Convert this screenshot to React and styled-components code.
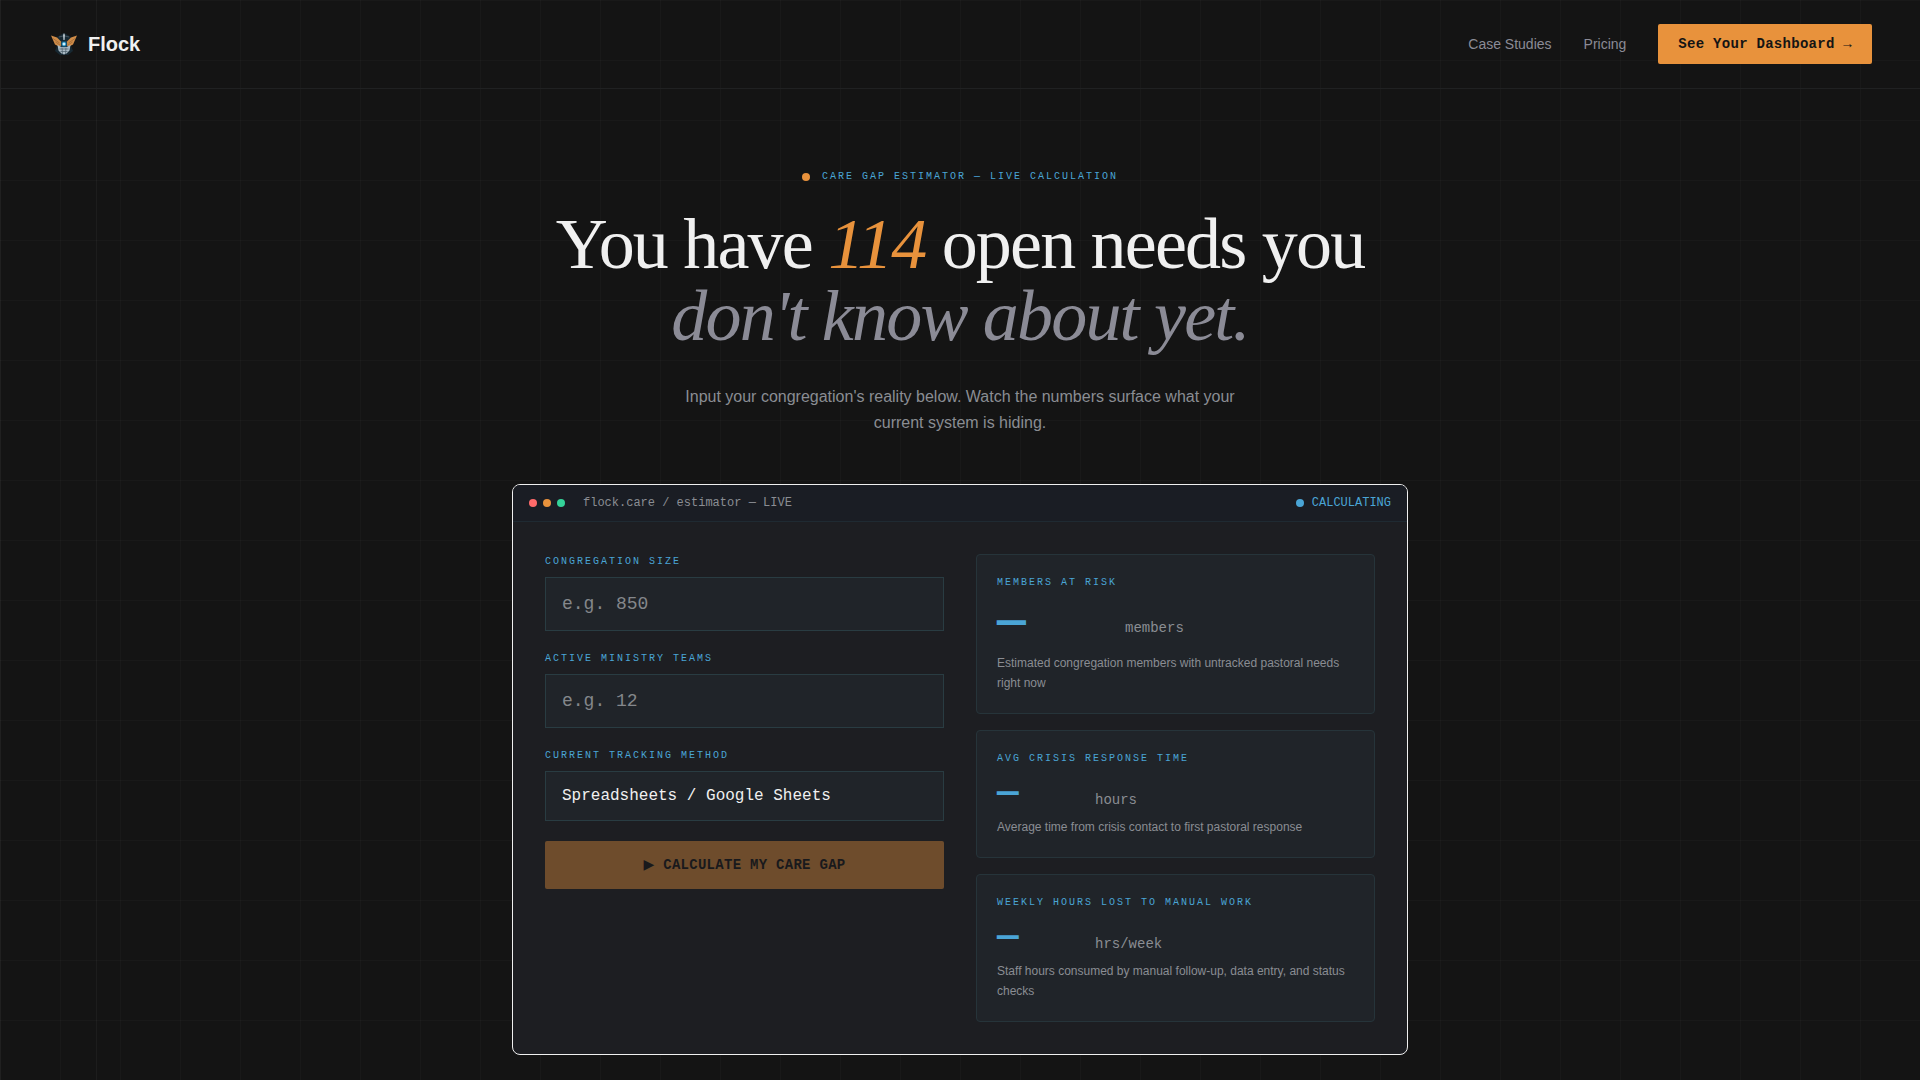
import React, { useState } from "react";
import styled, { createGlobalStyle, ThemeProvider } from "styled-components";

const theme = {
  bg: "#141414",
  panel: "#1d1e22",
  panelHeader: "#1a1d24",
  field: "#202429",
  fieldLine: "#293c42",
  text: "#f0f0f0",
  muted: "#8b8b96",
  soft: "#8a8d93",
  blue: "#4aa5d6",
  orange: "#e8923c",
  sans: '"Liberation Sans", Arial, sans-serif',
  serif: '"Liberation Serif", "Times New Roman", serif',
  mono: '"Liberation Mono", "Courier New", monospace',
};

const GlobalStyle = createGlobalStyle`
  *, *::before, *::after { box-sizing: border-box; }
  body {
    margin: 0;
    background-color: ${theme.bg};
    color: ${theme.text};
    font-family: ${theme.sans};
    font-size: 16px;
  }
`;

const Page = styled.div`
  min-height: 100vh;
  background-image:
    linear-gradient(90deg, rgba(255, 255, 255, 0.03) 1px, transparent 1px),
    linear-gradient(90deg, rgba(255, 255, 255, 0.04) 1px, transparent 1px),
    linear-gradient(rgba(255, 255, 255, 0.02) 1px, transparent 1px),
    linear-gradient(90deg, rgba(255, 255, 255, 0.02) 1px, transparent 1px);
  background-size: 1px 100%, 1px 100%, 60px 60px, 60px 60px;
  background-position: 0 0, 96px 0, 0 0, 0 0;
  background-repeat: no-repeat, no-repeat, repeat, repeat;
`;

const Nav = styled.nav`
  display: flex;
  align-items: center;
  justify-content: space-between;
  padding: 24px 48px;
  border-bottom: 1px solid #202122;
`;

const Brand = styled.a`
  display: flex;
  align-items: center;
  gap: 8px;
  color: ${(p) => p.theme.text};
  font-size: 20px;
  font-weight: 700;
  line-height: 28px;
  text-decoration: none;
`;

const NavLinks = styled.div`
  display: flex;
  align-items: center;
  gap: 32px;
`;

const NavLink = styled.a`
  color: ${(p) => p.theme.muted};
  font-size: 14px;
  line-height: 20px;
  text-decoration: none;
`;

const NavButton = styled.button`
  padding: 10px 20px;
  border: 0;
  border-radius: 2px;
  background: ${(p) => p.theme.orange};
  color: ${(p) => p.theme.bg};
  font-family: ${(p) => p.theme.mono};
  font-size: 14px;
  font-weight: 700;
  line-height: 20px;
  letter-spacing: 0.02em;
  cursor: pointer;
`;

const Hero = styled.main`
  display: flex;
  flex-direction: column;
  align-items: center;
  padding: 80px 24px 24px;
`;

const Tag = styled.div`
  color: ${(p) => p.theme.blue};
  font-family: ${(p) => p.theme.mono};
  font-size: 10px;
  line-height: 15px;
  letter-spacing: 0.2em;
  text-transform: uppercase;
`;

const Eyebrow = styled(Tag)`
  display: flex;
  align-items: center;
  gap: 12px;
  margin-bottom: 24px;
`;

const Dot = styled.span`
  width: 8px;
  height: 8px;
  flex: none;
  border-radius: 50%;
  background: ${(p) => p.$color};
`;

const Headline = styled.h1`
  margin: 0 0 32px;
  font-family: ${(p) => p.theme.serif};
  font-size: 72px;
  font-weight: 400;
  line-height: 72px;
  letter-spacing: -0.025em;
  text-align: center;
`;

const Accent = styled.em`
  color: ${(p) => p.$color};
`;

const Lead = styled.p`
  max-width: 576px;
  margin: 0 0 48px;
  color: ${(p) => p.theme.soft};
  font-size: 16px;
  line-height: 26px;
  text-align: center;
`;

const Terminal = styled.section`
  width: 100%;
  max-width: 896px;
  overflow: hidden;
  border: 1px solid ${(p) => p.theme.text};
  border-radius: 8px;
  background: ${(p) => p.theme.panel};
`;

const TerminalBar = styled.header`
  display: flex;
  align-items: center;
  justify-content: space-between;
  padding: 10px 16px;
  border-bottom: 1px solid #1f2a32;
  background: ${(p) => p.theme.panelHeader};
  font-family: ${(p) => p.theme.mono};
  font-size: 12px;
  line-height: 16px;
`;

const BarGroup = styled.div`
  display: flex;
  align-items: center;
  gap: ${(p) => p.$gap}px;
  color: ${(p) => p.$color};
`;

const Columns = styled.div`
  display: grid;
  grid-template-columns: 1fr 1fr;
  gap: 32px;
  padding: 32px;

  @media (max-width: 760px) {
    grid-template-columns: 1fr;
  }
`;

const Form = styled.form`
  display: flex;
  flex-direction: column;
  gap: 20px;
`;

const Field = styled.div`
  display: flex;
  flex-direction: column;
  gap: 8px;
`;

const Input = styled.input`
  width: 100%;
  height: 54px;
  padding: 0 16px;
  border: 1px solid ${(p) => p.theme.fieldLine};
  border-radius: 0;
  outline: none;
  appearance: none;
  background: ${(p) => p.theme.field};
  color: ${(p) => p.theme.text};
  font-family: ${(p) => p.theme.mono};
  font-size: 18px;

  &::placeholder {
    color: #84878b;
    opacity: 1;
  }
`;

const Select = styled(Input)`
  height: 50px;
  font-size: 16px;
`;

const Submit = styled.button`
  padding: 14px 20px;
  border: 0;
  border-radius: 2px;
  background: ${(p) => p.theme.orange};
  color: ${(p) => p.theme.bg};
  font-family: ${(p) => p.theme.mono};
  font-size: 14px;
  font-weight: 700;
  line-height: 20px;
  letter-spacing: 0.02em;
  text-transform: uppercase;
  cursor: pointer;

  &:disabled {
    opacity: 0.4;
    cursor: not-allowed;
  }
`;

const PlayGlyph = styled.span`
  font-family: "DejaVu Sans", sans-serif;
  line-height: 1;
`;

const Results = styled.div`
  display: flex;
  flex-direction: column;
  gap: 16px;
`;

const Card = styled.article`
  padding: 20px;
  border: 1px solid #26343a;
  border-radius: 4px;
  background: ${(p) => p.theme.field};
`;

const Metric = styled.div`
  display: flex;
  align-items: flex-end;
  gap: 8px;
  margin: 8px 0 ${(p) => (p.$large ? 7 : 3)}px;
  font-family: ${(p) => p.theme.mono};
`;

const Value = styled.span`
  min-width: ${(p) => (p.$large ? 120 : 90)}px;
  color: ${(p) => p.theme.blue};
  font-size: ${(p) => (p.$large ? 48 : 36)}px;
  font-weight: 700;
  line-height: ${(p) => (p.$large ? 48 : 40)}px;
`;

const Unit = styled.span`
  margin-bottom: ${(p) => (p.$large ? 8 : 4)}px;
  color: ${(p) => p.theme.soft};
  font-size: 14px;
  line-height: 20px;
`;

const Note = styled.p`
  margin: 0;
  color: ${(p) => p.theme.soft};
  font-size: 12px;
  line-height: 20px;
`;

function Logo() {
  return (
    <svg width="32" height="32" viewBox="0 0 32 32" aria-hidden="true">
      <path d="M9 9 L15 5.5 L17 5.5 L23 9 L23 18 L25 23 L20 27 L12 27 L7 23 L9 18Z" fill="#172832" />
      <path d="M3 7.5 L9 9.5 L13 13.5 L13.4 17.5 L11 18.5 L7 16.5Z" fill="#d08c48" />
      <path d="M29 7.5 L23 9.5 L19 13.5 L18.6 17.5 L21 18.5 L25 16.5Z" fill="#d08c48" />
      <path d="M5 10.5 L11.5 15 M7.5 14 L12 17 M27 10.5 L20.5 15 M24.5 14 L20 17" stroke="#8a5c33" strokeWidth="0.6" />
      <path d="M11 9 L15 8 M21 9 L17 8" stroke="#44535e" strokeWidth="1.2" />
      <path d="M16 5 L17 7 L16.6 12 L15.4 12 L15 7Z" fill="#b4c0c8" />
      <path d="M9.5 17 L13.5 19 L18.5 19 L22.5 17 L21.5 22.5 L18.5 25.5 L16 26.5 L13.5 25.5 L10.5 22.5Z" fill="#a9b9c4" />
      <path d="M11.5 21 L20.5 21 M14 19.5 L14.5 26 M18 19.5 L17.5 26 M12.5 23.5 L19.5 23.5" stroke="#4b5d69" strokeWidth="0.7" />
      <circle cx="16" cy="16" r="3.2" fill="#174c68" />
      <circle cx="16" cy="16" r="2" fill="#55bde8" />
      <circle cx="16" cy="16" r="1.1" fill="#effaff" />
    </svg>
  );
}

const metrics = [
  {
    label: "Members at risk",
    unit: "members",
    note: "Estimated congregation members with untracked pastoral needs right now",
    large: true,
  },
  {
    label: "Avg crisis response time",
    unit: "hours",
    note: "Average time from crisis contact to first pastoral response",
  },
  {
    label: "Weekly hours lost to manual work",
    unit: "hrs/week",
    note: "Staff hours consumed by manual follow-up, data entry, and status checks",
  },
];

export default function App() {
  const [size, setSize] = useState("");
  const [teams, setTeams] = useState("");

  return (
    <ThemeProvider theme={theme}>
      <GlobalStyle />
      <Page>
        <Nav>
          <Brand href="#">
            <Logo />
            Flock
          </Brand>
          <NavLinks>
            <NavLink href="#case-studies">Case Studies</NavLink>
            <NavLink href="#pricing">Pricing</NavLink>
            <NavButton type="button">See Your Dashboard →</NavButton>
          </NavLinks>
        </Nav>

        <Hero>
          <Eyebrow>
            <Dot $color={theme.orange} />
            Care Gap Estimator — Live Calculation
          </Eyebrow>
          <Headline>
            You have <Accent $color={theme.orange}>114</Accent> open needs you
            <br />
            <Accent $color={theme.muted}>don't know about yet.</Accent>
          </Headline>
          <Lead>
            Input your congregation's reality below. Watch the numbers surface what your current
            system is hiding.
          </Lead>

          <Terminal>
            <TerminalBar>
              <BarGroup $gap={18} $color={theme.soft}>
                <BarGroup $gap={6}>
                  <Dot $color="#ff6b6b" />
                  <Dot $color={theme.orange} />
                  <Dot $color="#34d399" />
                </BarGroup>
                flock.care / estimator — LIVE
              </BarGroup>
              <BarGroup $gap={8} $color={theme.blue}>
                <Dot $color={theme.blue} />
                CALCULATING
              </BarGroup>
            </TerminalBar>

            <Columns>
              <Form onSubmit={(e) => e.preventDefault()}>
                <Field>
                  <Tag as="label" htmlFor="size">Congregation size</Tag>
                  <Input
                    id="size"
                    inputMode="numeric"
                    placeholder="e.g. 850"
                    value={size}
                    onChange={(e) => setSize(e.target.value)}
                  />
                </Field>
                <Field>
                  <Tag as="label" htmlFor="teams">Active ministry teams</Tag>
                  <Input
                    id="teams"
                    inputMode="numeric"
                    placeholder="e.g. 12"
                    value={teams}
                    onChange={(e) => setTeams(e.target.value)}
                  />
                </Field>
                <Field>
                  <Tag as="label" htmlFor="method">Current tracking method</Tag>
                  <Select as="select" id="method">
                    <option>Spreadsheets / Google Sheets</option>
                  </Select>
                </Field>
                <Submit type="submit" disabled={!size || !teams}>
                  <PlayGlyph>▶</PlayGlyph> Calculate my care gap
                </Submit>
              </Form>

              <Results>
                {metrics.map((m) => (
                  <Card key={m.label}>
                    <Tag>{m.label}</Tag>
                    <Metric $large={m.large}>
                      <Value $large={m.large}>—</Value>
                      <Unit $large={m.large}>{m.unit}</Unit>
                    </Metric>
                    <Note>{m.note}</Note>
                  </Card>
                ))}
              </Results>
            </Columns>
          </Terminal>
        </Hero>
      </Page>
    </ThemeProvider>
  );
}
